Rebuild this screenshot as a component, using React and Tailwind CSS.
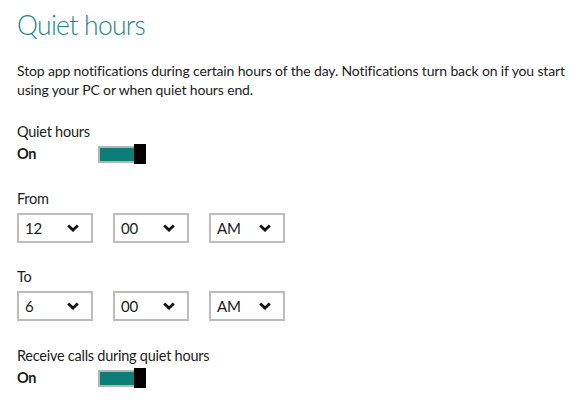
import React from "react";

// Dropdown rows for quiet hours
const fromTime = ["12", "00", "AM"];
const toTime = ["6", "00", "AM"];

const Chevron = () => (
    <svg width="12" height="8" viewBox="0 0 12 8" className="shrink-0">
        <path d="M1.2 1.4 L6 6 L10.8 1.4" fill="none" stroke="#111" strokeWidth="2.8" />
    </svg>
);

// Select box
const Select = ({ value }) => (
    <div className="flex items-center justify-between w-[76px] h-[30px] border-2 border-[#bcbcbc] bg-white pl-[6px] pr-[12px]">
        <span className="text-[15px] leading-none text-[#1c1c1c]">{value}</span>
        <Chevron />
    </div>
);

// Toggle switch (on)
const Toggle = () => (
    <div className="flex items-center">
        <div className="w-[40px] h-[17px] border-2 border-[#b4b4b4] bg-[#0d7d78]" />
        <div className="w-[12px] h-[20px] bg-black -ml-[4px]" />
    </div>
);

const SwitchSetting = ({ label }) => (
    <div>
        <p className="text-[14.5px] leading-[22px]">{label}</p>
        <div className="flex items-center h-[22px]">
            <span className="w-[81px] text-[14.5px] font-bold leading-[22px]">On</span>
            <Toggle />
        </div>
    </div>
);

const TimeRow = ({ label, values }) => (
    <div>
        <p className="text-[14.5px] leading-[22px]">{label}</p>
        <div className="flex gap-[20px] mt-[3px]">
            {values.map((v, i) => (
                <Select key={i} value={v} />
            ))}
        </div>
    </div>
);

const App = () => {
    return (
        <div className="w-[580px] h-[406px] bg-white pl-[17px] pt-[7px] text-[#1c1c1c] font-['Lato',sans-serif] tracking-[-0.25px] overflow-hidden">
            {/* Title */}
            <h1 className="text-[26.5px] font-light leading-[36px] tracking-[-0.7px] text-[#1f8686]">Quiet hours</h1>

            {/* Description */}
            <p className="mt-[18px] text-[14px] leading-[19px] tracking-[-0.14px] whitespace-nowrap">
                Stop app notifications during certain hours of the day. Notifications turn back on if you start
                <br />
                using your PC or when quiet hours end.
            </p>

            <div className="mt-[22px]">
                <SwitchSetting label="Quiet hours" />
            </div>

            <div className="mt-[23px]">
                <TimeRow label="From" values={fromTime} />
            </div>

            <div className="mt-[23px]">
                <TimeRow label="To" values={toTime} />
            </div>

            <div className="mt-[24px]">
                <SwitchSetting label="Receive calls during quiet hours" />
            </div>
        </div>
    );
};

export default App;
